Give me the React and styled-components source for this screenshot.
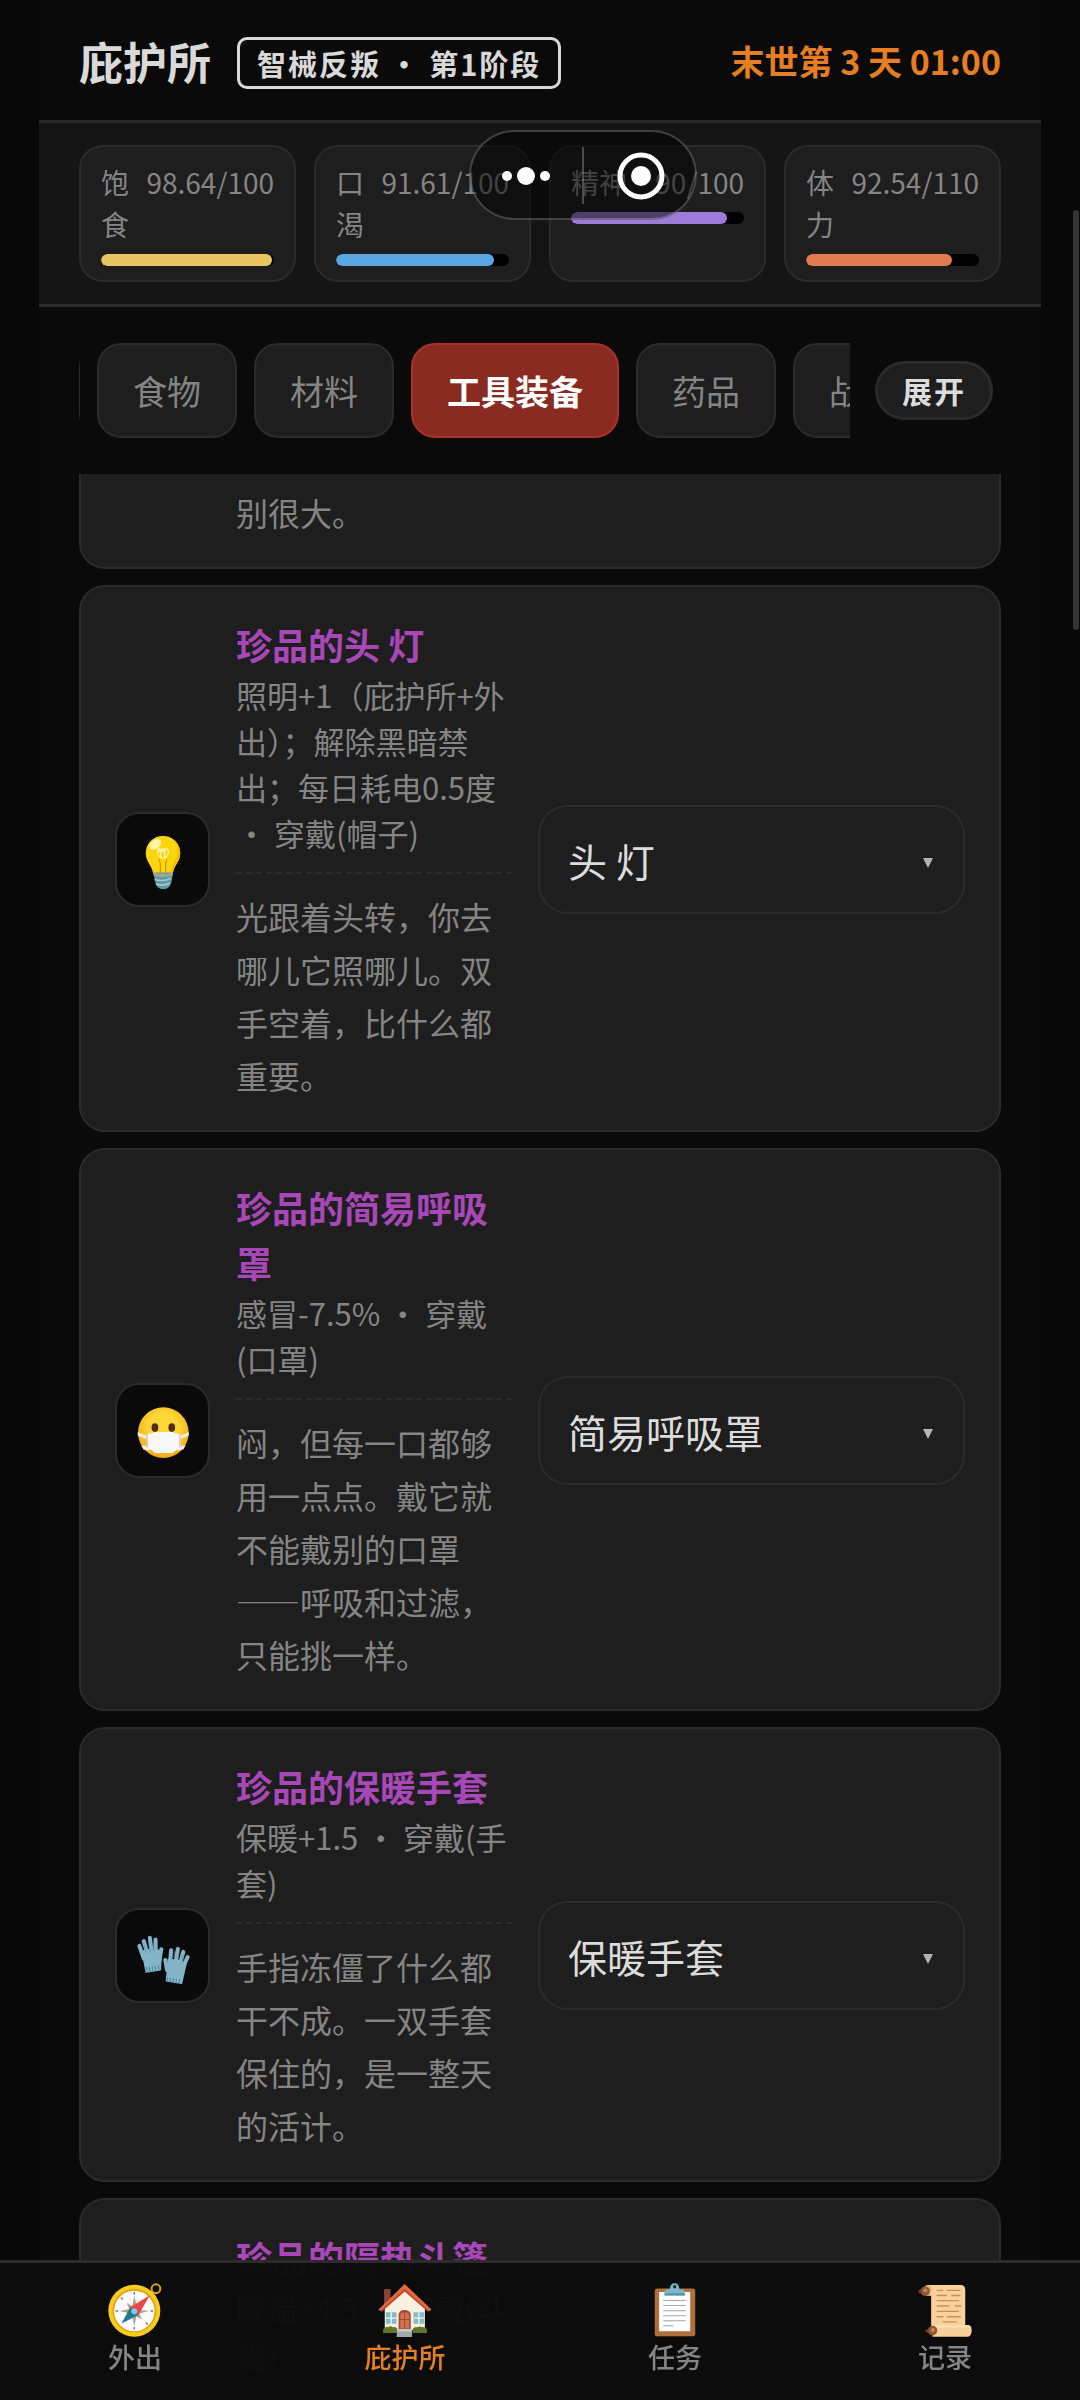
import React, { useLayoutEffect, useRef, useState } from 'react';
import styled, { createGlobalStyle } from 'styled-components';

const GlobalStyle = createGlobalStyle`
  *, *::before, *::after { box-sizing: border-box; }
  body {
    margin: 0;
    background: #080808;
    color: #dcdcdc;
    font-family: "Noto Sans CJK SC", "Noto Sans", sans-serif;
    overflow: hidden;
  }
  button, select { font-family: inherit; }
`;

const line = '#2b2b2b';
const panel = '#1e1e1e';

const Shell = styled.div`
  display: flex;
  flex-direction: column;
  height: 100vh;
  margin: 0 39px;
  background: #0a0a0a;
  overflow: hidden;
`;

const Header = styled.header`
  display: flex;
  align-items: center;
  justify-content: space-between;
  flex: none;
  padding: 37px 40px 31px;
`;

const Heading = styled.div`
  display: flex;
  align-items: center;
  gap: 26px;
`;

const Title = styled.h1`
  margin: 0;
  padding-bottom: 4px;
  font-size: 44px;
  line-height: 48px;
  font-weight: 700;
  color: #d9d9d9;
`;

const Badge = styled.span`
  padding: 0 17px;
  border: 3px solid #d9d9d9;
  border-radius: 10px;
  font-size: 29px;
  line-height: 46px;
  font-weight: 700;
  letter-spacing: 2px;
  color: #d9d9d9;
`;

const Clock = styled.time`
  padding-bottom: 4px;
  font-size: 34px;
  line-height: 48px;
  font-weight: 700;
  color: #e67e22;
`;

const Stats = styled.section`
  display: grid;
  grid-template-columns: repeat(4, 1fr);
  gap: 18px;
  flex: none;
  padding: 22px 40px;
  background: #151515;
  border-top: 3px solid ${line};
  border-bottom: 3px solid ${line};
`;

const StatCard = styled.div`
  padding: 14px 20px;
  border: 2px solid ${line};
  border-radius: 24px;
  background: ${panel};
`;

const StatText = styled.div`
  display: flex;
  justify-content: space-between;
  gap: 14px;
  margin-bottom: 9px;
  font-size: 28px;
  line-height: 42px;
  color: #858585;
`;

const StatValue = styled.span`
  white-space: nowrap;
`;

const StatName = styled.span`
  flex: 0 1 auto;
  min-width: 0;
`;

const Track = styled.div`
  height: 12px;
  border-radius: 6px;
  background: #000;
  overflow: hidden;
`;

const Fill = styled.div`
  height: 100%;
  border-radius: 6px;
  background: ${(p) => p.$color};
`;

const Filters = styled.div`
  display: flex;
  align-items: center;
  gap: 25px;
  flex: none;
  padding: 36px 48px 36px 40px;
`;

const Tabs = styled.nav`
  display: flex;
  gap: 17px;
  flex: 1;
  min-width: 0;
  overflow-x: auto;
  scrollbar-width: none;
`;

const Tab = styled.button`
  flex: none;
  padding: 20px 34px;
  border: 2px solid ${(p) => (p.$active ? '#a9332a' : line)};
  border-radius: 24px;
  background: ${(p) => (p.$active ? '#892b20' : panel)};
  color: ${(p) => (p.$active ? '#ffffff' : '#858585')};
  font-size: 34px;
  line-height: 51px;
  font-weight: ${(p) => (p.$active ? 700 : 400)};
`;

const Expand = styled.button`
  flex: none;
  padding: 0 24px;
  border: 3px solid ${line};
  border-radius: 30px;
  background: ${panel};
  color: #dcdcdc;
  font-size: 30px;
  line-height: 53px;
  font-weight: 700;
  letter-spacing: 2px;
`;

const List = styled.main`
  display: flex;
  flex-direction: column;
  gap: 16px;
  flex: 1;
  min-height: 0;
  padding: 0 40px;
  overflow: hidden;
`;

const Card = styled.article`
  display: grid;
  grid-template-columns: 95px minmax(0, 1fr) 427px;
  column-gap: 26px;
  align-items: center;
  flex: none;
  min-height: ${(p) => (p.$tail ? '0' : '454px')};
  padding: ${(p) => (p.$tail ? '12px' : '30px')} 34px 28px;
  border: 2px solid ${line};
  border-top-width: ${(p) => (p.$tail ? '0' : '2px')};
  border-radius: ${(p) => (p.$tail ? '0 0 26px 26px' : '26px')};
  background: ${panel};
`;

const IconBox = styled.div`
  display: flex;
  align-items: center;
  justify-content: center;
  height: 95px;
  padding-top: 5px;
  border: 2px solid ${line};
  border-radius: 24px;
  background: #0a0a0a;
`;

const Info = styled.div`
  grid-column: 2;
  align-self: start;
`;

const ItemName = styled.h2`
  margin: 0;
  font-size: 36px;
  line-height: 55px;
  font-weight: 700;
  color: #a847b8;
`;

const Effect = styled.p`
  margin: 0;
  font-size: 31px;
  line-height: 46px;
  color: #858585;
`;

const Story = styled.p`
  margin: ${(p) => (p.$plain ? '0' : '16px 0 0')};
  padding-top: ${(p) => (p.$plain ? '0' : '16px')};
  border-top: ${(p) => (p.$plain ? 'none' : `2px dashed ${line}`)};
  font-size: 32px;
  line-height: 53px;
  color: #858585;
`;

const Picker = styled.label`
  display: grid;
  align-items: center;
`;

const Select = styled.select`
  grid-area: 1 / 1;
  width: 100%;
  height: 109px;
  padding: 0 70px 0 28px;
  border: 2px solid ${line};
  border-radius: 30px;
  background: ${panel};
  color: #dcdcdc;
  font-size: 39px;
  appearance: none;
`;

const Caret = styled.svg`
  grid-area: 1 / 1;
  justify-self: end;
  margin: 6px 32px 0 0;
  pointer-events: none;
`;

const BottomNav = styled.nav`
  position: fixed;
  left: 0;
  right: 0;
  bottom: 0;
  display: grid;
  grid-template-columns: repeat(4, 1fr);
  height: 140px;
  border-top: 3px solid ${line};
  background: rgba(12, 12, 12, 0.98);
`;

const NavItem = styled.a`
  display: flex;
  flex-direction: column;
  align-items: center;
  gap: 2px;
  padding-top: 20px;
  font-size: 27px;
  line-height: 36px;
  font-weight: 500;
  color: ${(p) => (p.$active ? '#e67e22' : '#858585')};
  text-decoration: none;
`;

const Capsule = styled.div`
  position: fixed;
  top: 130px;
  left: 469px;
  display: grid;
  grid-template-columns: 111px 1fr;
  align-items: center;
  width: 228px;
  height: 90px;
  border: 2px solid rgba(255, 255, 255, 0.22);
  border-radius: 45px;
  background: rgba(0, 0, 0, 0.5);
`;

const CapsuleButton = styled.button`
  display: flex;
  align-items: center;
  justify-content: center;
  height: 100%;
  padding: 2px 2px 0 0;
  border: 0;
  background: none;

  & + & {
    position: relative;
    padding: 2px 0 0 4px;
  }

  & + &::before {
    content: '';
    position: absolute;
    left: 0;
    top: 15px;
    width: 2px;
    height: 57px;
    background: rgba(255, 255, 255, 0.25);
  }
`;

const ScrollThumb = styled.div`
  position: fixed;
  top: 210px;
  right: 1px;
  width: 6px;
  height: 420px;
  border-radius: 3px;
  background: #343434;
`;

const Emoji = ({ children }) => (
  <svg width="54" height="54" viewBox="0 0 160 160" aria-hidden="true">{children}</svg>
);

const Bulb = () => (
  <Emoji>
    <path d="M80 3C50 3 29 26 29 54c0 27 19 35 22 62h58c3-27 22-35 22-62C131 26 110 3 80 3z" fill="#fdd50b" />
    <path d="M110 14c12 12 14 26 12 42-3 22-19 32-21 58h8c3-27 22-35 22-60 0-17-8-32-21-40z" fill="#f6bd08" />
    <ellipse cx="57" cy="28" rx="20" ry="13" transform="rotate(-38 57 28)" fill="#fff5a4" />
    <path d="M64 48c0-9 9-9 9 0v20m0-20c0-9 12-9 12 0v20m0-20c0-9 11-9 11 0 0 12-7 20-16 20S64 60 64 48z" fill="none" stroke="#fff6b8" strokeWidth="4" />
    <path d="M68 72l4 12v28M92 72l-4 12v28" fill="none" stroke="#c28a08" strokeWidth="3" />
    <path d="M51 111h59l-5 28c-3 14-11 21-24 21s-21-7-24-21z" fill="#5f98a6" />
    <path d="M51 111q29 8 59 0l-2 10q-28 8-55 0z" fill="#a3a58b" />
    <path d="M55 132q26 7 49-3M59 146q22 6 41-3" fill="none" stroke="#a3cbd3" strokeWidth="5" />
  </Emoji>
);

const MaskFace = () => (
  <Emoji>
    <defs>
      <radialGradient id="face" cx="50%" cy="40%" r="60%">
        <stop offset="50%" stopColor="#ffd735" />
        <stop offset="100%" stopColor="#f5a718" />
      </radialGradient>
    </defs>
    <circle cx="81" cy="79" r="75" fill="url(#face)" />
    <path d="M5 78l32 12v10L5 88zM157 78l-32 12v10l31-12zM15 116l24 4v12l-17-3zM147 116l-24 4v12l17-3z" fill="#f3eee2" />
    <ellipse cx="56" cy="64" rx="10" ry="13" fill="#512c13" />
    <ellipse cx="106" cy="64" rx="10" ry="13" fill="#512c13" />
    <path d="M32 83q15 0 25-6h50q10 6 25 6v43q-14 3-23 13H56q-9-10-24-13z" fill="#f8f8f8" />
    <path d="M33 84v40M130 84v40" stroke="#bcb9b1" strokeWidth="3" />
  </Emoji>
);

const Gloves = () => (
  <Emoji>
    <g fill="none" stroke="#83b4c8" strokeWidth="12" strokeLinecap="round">
      <path d="M10 44l13 38M23 30l12 42M41 20l6 48M58 25l0 45M75 54l-6 32" />
      <path d="M19 63L30 122l42-7 4-55-16-5-34 1z" fill="#83b4c8" strokeWidth="4" strokeLinejoin="round" />
    </g>
    <g fill="none" stroke="#83b4c8" strokeWidth="12" strokeLinecap="round">
      <path d="M104 57l-3 34M124 53l-6 38M140 62l-10 37M153 77l-14 30M87 86l5 30" />
      <path d="M96 84l-6 64 45 7 13-57-20-11z" fill="#83b4c8" strokeWidth="4" strokeLinejoin="round" />
    </g>
    <path d="M31 107l3 14M39 106l3 14M48 104l2 14M57 103l2 13M66 102l2 12M93 138l-1 11M102 139l-1 11M111 140l-2 11M120 142l-2 11M129 143l-2 11" stroke="#4e8198" strokeWidth="3" />
    <path d="M30 67l-5-25M43 63l-5-25M54 64l-2-27M112 80l2-20M124 82l4-20M135 90l6-20" stroke="#5c8da3" strokeWidth="2" />
  </Emoji>
);

const Compass = () => (
  <Emoji>
    <circle cx="142" cy="17" r="13" fill="none" stroke="#d9a514" strokeWidth="6" />
    <circle cx="78" cy="82" r="77" fill="#f8cc1c" />
    <circle cx="78" cy="82" r="65" fill="#e0a411" />
    <circle cx="78" cy="83" r="60" fill="#fbfbfb" />
    <path d="M78 27v8M78 130v8M22 83h8M126 83h8M38 43l6 6M112 117l6 6" stroke="#7a7a7a" strokeWidth="4" />
    <path d="M78 38l7 30 17 0-9 11 28 4-28 7 8 18-17-9-6 30-6-30-17 8 8-17-28-7 28-6-8-18 17 9z" fill="#b0a396" />
    <path d="M124 36L90 95 66 72z" fill="#ed4444" />
    <path d="M40 120l26-48 24 23z" fill="#207a8c" />
    <circle cx="78" cy="84" r="9" fill="#82c9e6" />
  </Emoji>
);

const House = () => (
  <Emoji>
    <path d="M18 18h19v52H18z" fill="#8c4630" />
    <path d="M79 10l60 64v66H20V74z" fill="#fbf0df" />
    <path d="M79 3l80 76-10 5L79 22 10 84 1 79z" fill="#e4693e" />
    <path d="M79 18l72 64-3 3-69-60-68 60-4-3z" fill="#b9452c" />
    <path d="M23 87h32v34H23zM105 87h32v34h-32z" fill="#83bdc5" />
    <path d="M39 87v34M23 104h32M121 87v34M105 104h32" stroke="#f2f4ee" strokeWidth="4" />
    <path d="M61 138V93q3-13 18-13t18 13v45z" fill="#a64731" />
    <path d="M66 134V95q3-9 13-9t13 9v39z" fill="#d17255" />
    <path d="M79 86v48M66 108h26" stroke="#a64731" strokeWidth="3" />
    <path d="M15 148v-10q5-9 15-7 6-5 14 0 10-2 13 5v12zM103 148v-12q5-7 14-5 8-4 13 0 11-2 15 7v10z" fill="#60762b" />
    <path d="M57 136h44v24H55z" fill="#a2a8ac" />
    <path d="M57 136h44v8H57z" fill="#c4c8ca" />
  </Emoji>
);

const Clipboard = () => (
  <Emoji>
    <rect x="20" y="16" width="120" height="142" rx="8" fill="#b0703c" />
    <path d="M33 27h92v116H33z" fill="#fdfdfd" />
    <path d="M45 52h67M45 67h67M45 82h67M45 97h67M45 112h67M45 127h30" stroke="#a5a8ae" strokeWidth="3" />
    <path d="M49 37V25q2-6 16-7 1-17 14-17t14 17q14 1 16 7v12z" fill="#7fb6cd" />
    <circle cx="79" cy="11" r="5" fill="#17303b" />
    <path d="M49 30h60v7H49z" fill="#5595b0" />
  </Emoji>
);

const Scroll = () => (
  <Emoji>
    <path d="M26 6h100q14 0 14 15v108H39V38H26z" fill="#fbd09a" />
    <path d="M20 8h14q12 14 0 29H20z" fill="#e8ae70" />
    <circle cx="21" cy="24" r="14" fill="#8c5834" />
    <circle cx="22" cy="22" r="6" fill="#c08a5c" />
    <path d="M1 21h9v9H3z" fill="#6c4126" />
    <path d="M55 22h20M86 22h40M55 37h31M98 37h28M55 52h67M55 68h38M109 68h20M55 84h67M55 100h20M86 100h41M73 115h42" stroke="#c39161" strokeWidth="4" />
    <path d="M43 125h107q10 3 9 17t-10 17H43z" fill="#fbd09a" />
    <path d="M43 125h107q6 1 8 7H50z" fill="#ffe1b4" />
    <circle cx="43" cy="141" r="14" fill="#8c5834" />
    <circle cx="44" cy="139" r="6" fill="#c08a5c" />
    <path d="M22 138h9v9h-7z" fill="#6c4126" />
  </Emoji>
);

const stats = [
  { name: '饱食', value: 98.64, max: 100, color: '#e8c463' },
  { name: '口渴', value: 91.61, max: 100, color: '#5ba7e3' },
  { name: '精神', value: 90, max: 100, color: '#9f7bd9' },
  { name: '体力', value: 92.54, max: 110, color: '#e07b54' },
];

const tabs = ['全部', '食物', '材料', '工具装备', '药品', '战斗'];

const items = [
  {
    name: '头 灯',
    effect: '照明+1（庇护所+外出）；解除黑暗禁出；每日耗电0.5度 · 穿戴(帽子)',
    story: '光跟着头转，你去哪儿它照哪儿。双手空着，比什么都重要。',
    icon: <Bulb />,
  },
  {
    name: '简易呼吸罩',
    effect: '感冒-7.5% · 穿戴(口罩)',
    story: '闷，但每一口都够用一点点。戴它就不能戴别的口罩——呼吸和过滤，只能挑一样。',
    icon: <MaskFace />,
  },
  {
    name: '保暖手套',
    effect: '保暖+1.5 · 穿戴(手套)',
    story: '手指冻僵了什么都干不成。一双手套保住的，是一整天的活计。',
    icon: <Gloves />,
  },
  { name: '隔热斗篷', effect: '降温+4.5 · 穿戴(斗篷)' },
];

const navItems = [
  { label: '外出', icon: <Compass /> },
  { label: '庇护所', icon: <House /> },
  { label: '任务', icon: <Clipboard /> },
  { label: '记录', icon: <Scroll /> },
];

function CategoryTabs() {
  const ref = useRef(null);
  const [active, setActive] = useState('工具装备');

  useLayoutEffect(() => {
    const row = ref.current;
    row.scrollLeft = row.children[0].offsetWidth - 1;
  }, []);

  return (
    <Filters>
      <Tabs ref={ref} aria-label="分类">
        {tabs.map((t) => (
          <Tab key={t} type="button" $active={t === active} onClick={() => setActive(t)}>{t}</Tab>
        ))}
      </Tabs>
      <Expand type="button">展开</Expand>
    </Filters>
  );
}

function ItemCard({ item }) {
  return (
    <Card>
      <IconBox>{item.icon}</IconBox>
      <Info>
        <ItemName>珍品的{item.name}</ItemName>
        <Effect>{item.effect}</Effect>
        {item.story && <Story>{item.story}</Story>}
      </Info>
      <Picker>
        <Select aria-label={item.name} defaultValue={item.name}>
          <option>{item.name}</option>
        </Select>
        <Caret width="10" height="10" viewBox="0 0 10 10" aria-hidden="true">
          <path d="M0 0h10L5 10z" fill="#b4b4b4" />
        </Caret>
      </Picker>
    </Card>
  );
}

export default function App() {
  return (
    <>
      <GlobalStyle />
      <Shell lang="zh-CN">
        <Header>
          <Heading>
            <Title>庇护所</Title>
            <Badge>智械反叛 · 第1阶段</Badge>
          </Heading>
          <Clock>末世第 3 天 01:00</Clock>
        </Header>
        <Stats>
          {stats.map((s) => (
            <StatCard key={s.name}>
              <StatText>
                <StatName>{s.name}</StatName>
                <StatValue>{s.value}/{s.max}</StatValue>
              </StatText>
              <Track>
                <Fill $color={s.color} style={{ width: `${(s.value / s.max) * 100}%` }} />
              </Track>
            </StatCard>
          ))}
        </Stats>
        <CategoryTabs />
        <List>
          <Card $tail>
            <Info>
              <Story $plain>别很大。</Story>
            </Info>
          </Card>
          {items.map((item) => (
            <ItemCard key={item.name} item={item} />
          ))}
        </List>
      </Shell>
      <BottomNav lang="zh-CN">
        {navItems.map((n) => (
          <NavItem key={n.label} href="#" $active={n.label === '庇护所'}>
            {n.icon}
            {n.label}
          </NavItem>
        ))}
      </BottomNav>
      <Capsule>
        <CapsuleButton type="button" aria-label="更多">
          <svg width="48" height="18" viewBox="0 0 48 18" fill="#fff">
            <circle cx="5" cy="9" r="5" />
            <circle cx="24" cy="9" r="9" />
            <circle cx="43" cy="9" r="5" />
          </svg>
        </CapsuleButton>
        <CapsuleButton type="button" aria-label="关闭">
          <svg width="48" height="48" viewBox="0 0 48 48">
            <circle cx="24" cy="24" r="21" fill="none" stroke="#fff" strokeWidth="5" />
            <circle cx="24" cy="24" r="10" fill="#fff" />
          </svg>
        </CapsuleButton>
      </Capsule>
      <ScrollThumb />
    </>
  );
}
